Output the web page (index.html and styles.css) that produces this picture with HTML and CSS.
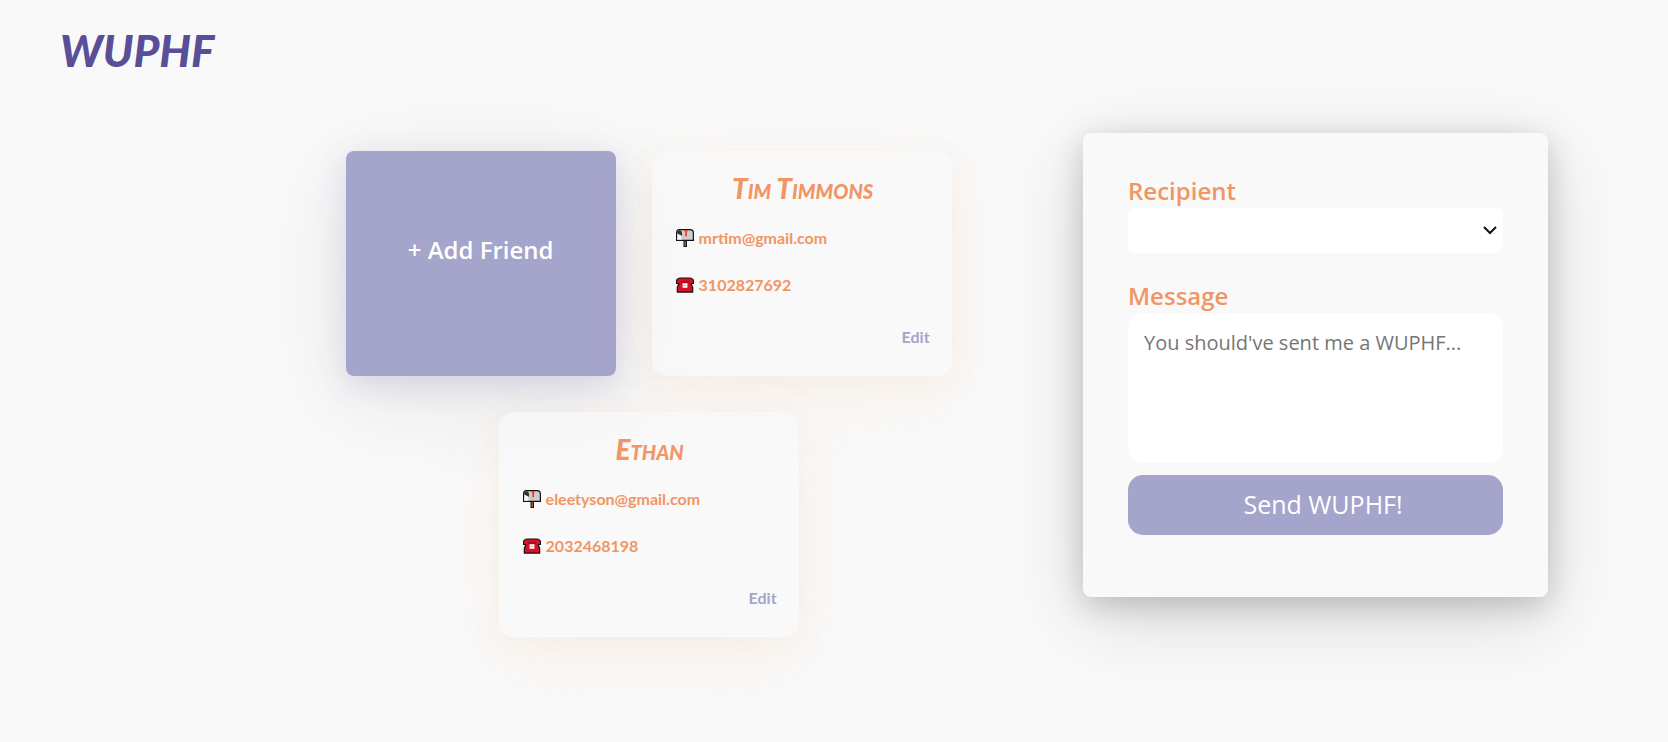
FILE: index.html
```html
<!DOCTYPE html>
<html lang="en">
<head>
<meta charset="utf-8">
<title>WUPHF</title>
<link rel="stylesheet" href="styles.css">
</head>
<body>
<svg class="sprite" aria-hidden="true">
  <symbol id="mailbox" viewBox="0 0 18 18">
    <path d="M7.500 11h3.500v7H7.500z" fill="#111"/>
    <path d="M8.600 11.500h1.300v5.500H8.600z" fill="#b5652b"/>
    <path d="M3.500 .6h10.500q3.400 0 3.400 3.600v7.200H.6V4.200Q.6.6 3.500.6z" fill="#ccc" stroke="#111" stroke-width="1.200"/>
    <path d="M1.200 7V4.200q0-3 2.300-3t2.500 3V7z" fill="#333"/>
    <path d="M1.200 4.500l4.300 2v4.300H1.200z" fill="#f4f4f4"/>
    <path d="M8 1.200h4L11 3v4.200H9.300V3z" fill="#f03a17"/>
  </symbol>
  <symbol id="phone" viewBox="0 0 18 18">
    <path d="M4.500 2h9q4 .3 4 3.300v2.200h-2.400l1.600 4v4.600H1.300v-4.600l1.600-4H.5V5.300Q.5 2.300 4.500 2z" fill="#d80f26" stroke="#111" stroke-width="1.200" stroke-linejoin="round"/>
    <path d="M5 5h8v1.500H5z" fill="#7d0715"/>
    <path d="M6.500 4.500v2M9 4.500v2M11.500 4.500v2" stroke="#d80f26"/>
    <path d="M6.600 7.200h4.800v4.600H6.600z" fill="#fff"/>
    <path d="M9 7.200v4.600M6.600 9.500h4.800" stroke="#f4a6ae" stroke-width=".6"/>
  </symbol>
</svg>
<header class="header">
  <h1 class="logo">WUPHF</h1>
</header>
<main class="main">
  <section class="friends">
    <button type="button" class="add-friend">+ Add Friend</button>
    <article class="friend">
      <h2 class="friend-name">Tim Timmons</h2>
      <p class="contact"><svg class="icon"><use href="#mailbox"/></svg>mrtim@gmail.com</p>
      <p class="contact"><svg class="icon"><use href="#phone"/></svg>3102827692</p>
      <a class="edit" href="#">Edit</a>
    </article>
    <article class="friend">
      <h2 class="friend-name">Ethan</h2>
      <p class="contact"><svg class="icon"><use href="#mailbox"/></svg>eleetyson@gmail.com</p>
      <p class="contact"><svg class="icon"><use href="#phone"/></svg>2032468198</p>
      <a class="edit" href="#">Edit</a>
    </article>
  </section>
  <form class="compose">
    <label class="label" for="recipient">Recipient</label>
    <div class="select-wrap">
      <select class="select" id="recipient"><option></option></select>
      <svg class="chevron" viewBox="0 0 14 9"><path d="M1 1l6 6 6-6" fill="none" stroke="#111" stroke-width="2"/></svg>
    </div>
    <label class="label" for="message">Message</label>
    <textarea class="message" id="message" placeholder="You should've sent me a WUPHF..."></textarea>
    <button type="submit" class="send">Send WUPHF!</button>
  </form>
</main>
</body>
</html>
```
FILE: styles.css
```css
* {
  box-sizing: border-box;
}

body {
  margin: 0;
  background: #f9f9f9;
  color: #f19564;
  font-family: "Open Sans", "Noto Sans", sans-serif;
}

button,
select,
textarea {
  border: 0;
  font-family: inherit;
}

.sprite {
  display: none;
}

.header {
  padding: 20px 60px;
}

.logo {
  margin: 0;
  color: #574f98;
  font: italic 900 44px/60px Lato, sans-serif;
}

.main {
  display: flex;
  align-items: flex-start;
  gap: 36px;
  padding: 33px 120px 60px 15%;
}

.friends {
  flex: 1;
  display: flex;
  flex-wrap: wrap;
  justify-content: center;
  gap: 36px;
  padding-top: 18px;
}

.add-friend {
  width: 270px;
  height: 225px;
  border-radius: 8px;
  background: #a5a4cb;
  color: #fff;
  font-size: 24px;
  font-weight: 600;
  padding: 0 0 28px;
  box-shadow: 0 8px 30px rgba(87, 79, 170, 0.16), 0 20px 90px rgba(40, 40, 60, 0.1);
}

.friend {
  display: flex;
  flex-direction: column;
  width: 300px;
  min-height: 225px;
  padding: 22px 22px 29px 24px;
  border-radius: 15px;
  background: rgba(249, 249, 249, 0.6);
  box-shadow: 0 8px 30px rgba(241, 149, 80, 0.08), 0 20px 80px rgba(220, 150, 90, 0.07);
}

.friend-name {
  margin: 0 0 25px;
  font: italic small-caps 900 28px/30px Lato, sans-serif;
  text-align: center;
}

.contact {
  display: flex;
  align-items: center;
  gap: 5px;
  margin: 0 0 27px;
  font: 700 16px/20px Lato, sans-serif;
}

.icon {
  width: 18px;
  height: 18px;
}

.edit {
  margin-top: auto;
  align-self: flex-end;
  color: #a5a4cb;
  font: 700 16px/20px Lato, sans-serif;
  text-decoration: none;
}

.compose {
  flex: 0 1 465px;
  display: flex;
  flex-direction: column;
  padding: 43px 45px 62px;
  border-radius: 8px;
  background: #f9f9f9;
  box-shadow: 0 8px 30px rgba(0, 0, 20, 0.18), 0 20px 80px rgba(0, 0, 0, 0.14);
}

.label {
  margin-bottom: 2px;
  font-size: 24px;
  font-weight: 600;
  line-height: 30px;
}

.select-wrap {
  position: relative;
  margin-bottom: 28px;
}

.select {
  display: block;
  width: 100%;
  height: 45px;
  padding: 0 32px 0 15px;
  border-radius: 8px;
  background: #fff;
  appearance: none;
}

.chevron {
  position: absolute;
  top: 18px;
  right: 6px;
  width: 14px;
  height: 9px;
  pointer-events: none;
}

.message {
  height: 150px;
  margin-bottom: 12px;
  padding: 16px;
  border-radius: 15px;
  background: #fff;
  font-size: 20px;
  line-height: 28px;
  resize: none;
}

.message::placeholder {
  color: #757575;
}

.send {
  height: 60px;
  padding: 0 0 2px 15px;
  border-radius: 15px;
  background: #a5a4cb;
  color: #fff;
  font-size: 25px;
}
```
